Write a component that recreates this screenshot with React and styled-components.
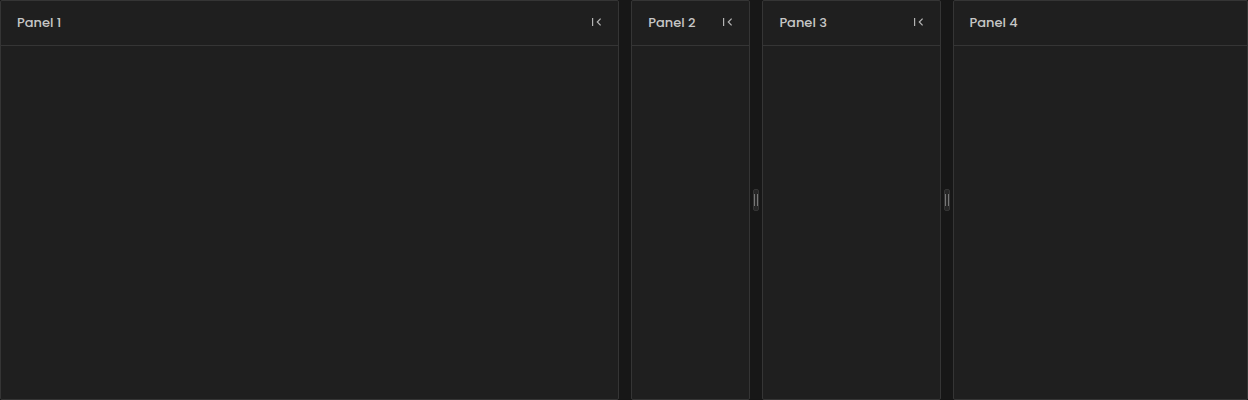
import React from "react";
import styled, { createGlobalStyle } from "styled-components";

const GlobalStyle = createGlobalStyle`
  body {
    margin: 0;
    background: #171717;
    font-family: Poppins, Inter, "Liberation Sans", sans-serif;
  }
`;

const Layout = styled.main`
  display: grid;
  grid-template-columns: 619.2px 12px 119.2px 12px 178.15px 12px minmax(0, 1fr);
  height: 400px;
`;

const Panel = styled.section`
  box-sizing: border-box;
  min-width: 0;
  background: #1f1f1f;
  border: 1px solid #353535;
  border-radius: 2px;
`;

const Header = styled.header`
  box-sizing: border-box;
  display: flex;
  align-items: center;
  justify-content: space-between;
  height: 45px;
  padding: 0 16px;
  border-bottom: 1px solid #353535;
`;

const Title = styled.h2`
  margin: 0;
  color: #c6c6c6;
  font-size: 13px;
  font-weight: 500;
  line-height: 20px;
  white-space: nowrap;
`;

const CollapseButton = styled.button`
  display: flex;
  padding: 0 0 2px;
  border: 0;
  background: none;
  color: #b4b4b4;
`;

const Gutter = styled.div`
  display: flex;
  align-items: center;
  justify-content: center;
`;

const Handle = styled.div`
  box-sizing: border-box;
  display: flex;
  align-items: center;
  justify-content: center;
  gap: 2px;
  width: 6px;
  height: 22px;
  border-radius: 2px;
  background: #272727;
  border: 1px solid #353535;
`;

const Grip = styled.span`
  width: 1px;
  height: 12px;
  background: #777;
`;

function CollapseIcon() {
  return (
    <svg width="12" height="12" viewBox="0 0 12 12" fill="none" stroke="currentColor" strokeWidth="1.2">
      <path d="M2.6 2v8M10.6 2.7L7.3 6l3.3 3.3" />
    </svg>
  );
}

function ResizeHandle() {
  return (
    <Gutter>
      <Handle>
        <Grip />
        <Grip />
      </Handle>
    </Gutter>
  );
}

function PanelCard({ title, collapsible }) {
  return (
    <Panel>
      <Header>
        <Title>{title}</Title>
        {collapsible && (
          <CollapseButton aria-label={`Collapse ${title}`}>
            <CollapseIcon />
          </CollapseButton>
        )}
      </Header>
    </Panel>
  );
}

export default function App() {
  return (
    <>
      <GlobalStyle />
      <Layout>
        <PanelCard title="Panel 1" collapsible />
        <Gutter />
        <PanelCard title="Panel 2" collapsible />
        <ResizeHandle />
        <PanelCard title="Panel 3" collapsible />
        <ResizeHandle />
        <PanelCard title="Panel 4" />
      </Layout>
    </>
  );
}
